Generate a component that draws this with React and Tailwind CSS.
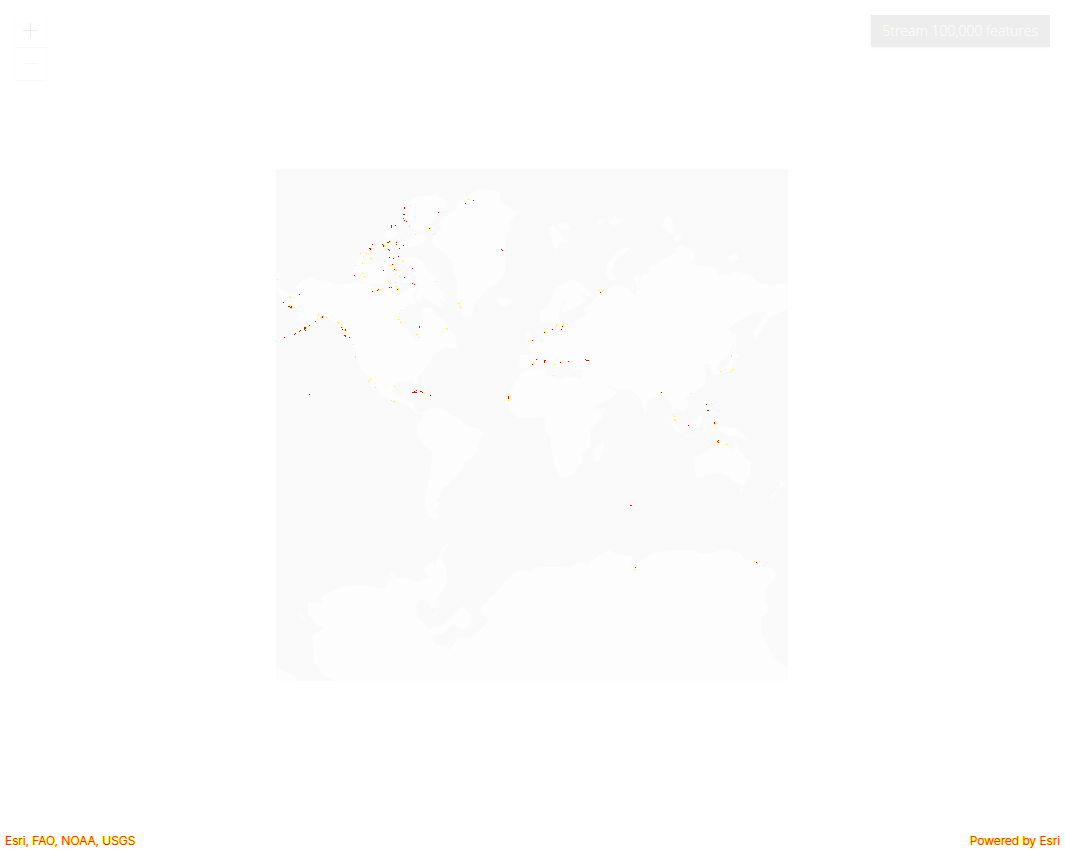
import React from "react";

// Land outlines, in third-of-a-pixel map units.
const LAND = [
  // North America
  "M18 378L30 386 48 396 70 402 85 398 78 380 95 362 122 351 140 360 170 362 200 375 240 370 290 370 312 382 345 388 375 402 395 405 425 372 440 388 430 410 440 430 420 432 400 448 384 476 392 498 418 510 432 540 446 546 452 520 448 500 456 478 452 450 470 442 490 448 500 470 520 478 530 500 545 512 560 540 548 556 560 565 555 568 525 562 510 574 490 585 480 605 466 625 446 648 443 660 446 684 438 688 430 662 400 662 375 668 372 700 385 710 400 706 405 698 415 700 413 722 433 726 433 748 445 757 456 756 452 763 438 760 425 748 410 733 370 722 335 710 318 685 300 660 292 648 308 672 320 692 310 688 285 642 268 622 258 600 258 568 240 542 222 520 205 495 180 478 155 472 138 484 120 496 95 512 72 525 110 496 92 485 80 478 88 462 68 455 60 440 72 428 50 412 30 408Z",
  // Greenland
  "M490 252L488 230 515 205 505 185 530 165 560 148 562 125 590 112 600 98 640 85 688 96 692 130 718 140 742 155 722 185 722 205 708 225 708 260 704 290 708 325 700 350 680 372 650 385 638 405 620 418 612 445 602 474 580 466 566 445 560 410 562 372 552 345 545 300 525 282Z",
  // Arctic archipelago
  "M403 148L422 118 450 108 500 105 528 125 520 148 498 170 482 188 488 205 470 215 440 214 412 190 402 168Z",
  "M410 292L440 290 462 312 476 335 500 352 498 375 522 395 525 425 508 420 528 446 500 438 470 415 438 400 452 378 430 345 408 325 392 310Z",
  "M298 318L330 300 350 318 352 345 338 372 300 370 270 362 275 340Z",
  "M252 318L262 296 290 300 300 318 270 345 252 346Z",
  "M272 278L300 262 322 270 318 290 282 296Z",
  "M340 225L362 205 384 212 376 235 352 240Z",
  "M385 248L420 232 440 222 470 230 462 250 420 262 392 266Z",
  "M345 280L372 272 384 300 372 316 352 308Z",
  "M395 352L420 348 425 362 410 372 396 366Z",
  "M440 400L455 410 450 424 438 418Z",
  "M545 545L558 538 562 565 540 562Z",
  "M425 697L448 690 468 702 460 706ZM470 708L492 714 480 718Z",
  // Iceland
  "M685 420L695 412 712 414 728 418 722 432 702 441 690 436Z",
  // South America
  "M457 757L470 748 485 740 520 748 548 768 570 775 580 793 600 800 626 806 640 818 638 830 625 850 622 870 612 888 583 910 578 930 560 952 545 962 540 975 520 982 512 1000 500 1020 509 1028 495 1054 508 1070 495 1082 475 1068 465 1040 466 1015 472 985 480 940 485 910 487 872 460 856 448 832 441 812 442 795 455 778Z",
  "M528 1050L540 1050 536 1057Z",
  // Africa and Madagascar
  "M765 630L780 632 830 622 832 648 868 660 885 650 930 654 938 680 968 728 975 748 1006 743 998 768 962 810 960 860 938 882 938 906 922 926 915 940 900 948 870 952 855 918 848 882 840 855 842 835 825 810 825 780 812 770 780 773 745 774 726 756 714 738 716 705 735 665Z",
  "M976 862L1000 845 1002 862 988 904 972 902Z",
  // Eurasia
  "M748 585L785 585 775 560 800 542 825 522 832 498 850 508 880 490 910 482 950 465 940 445 962 432 980 410 1000 392 1040 374 1070 382 1096 410 1104 382 1090 352 1108 345 1106 375 1118 345 1140 340 1134 320 1160 312 1175 300 1220 278 1218 262 1238 255 1268 270 1272 298 1262 312 1305 320 1322 320 1340 326 1345 346 1385 344 1388 332 1440 345 1470 370 1512 375 1540 370 1554 376 1554 448 1500 470 1480 500 1458 540 1452 515 1480 475 1488 455 1450 458 1400 486 1372 508 1390 522 1392 545 1370 590 1340 612 1344 642 1328 645 1322 612 1298 610 1308 640 1304 668 1275 698 1248 712 1256 738 1240 754 1212 740 1212 762 1235 788 1220 785 1198 722 1172 700 1136 720 1128 764 1106 710 1080 686 1042 688 1020 682 997 660 1018 684 1042 695 1018 720 970 738 930 668 942 630 905 627 905 604 892 604 894 626 862 590 842 582 874 620 858 622 826 590 800 595 788 615 775 626 748 622Z",
  "M810 450L830 446 850 410 860 382 905 357 935 370 962 398 960 410 930 402 950 424 922 440 878 460 876 446 892 418 872 434 866 480 856 492 842 482 812 488Z",
  "M765 520L778 510 784 528 798 548 782 554 768 548Z",
  // Svalbard, Franz Josef Land, Novaya Zemlya, Severnaya Zemlya
  "M835 202L852 196 878 228 892 250 876 240 856 272Z M862 192L888 186 905 205 870 210Z",
  "M982 182L1005 176 1002 186 990 195ZM1020 185L1035 164 1042 180 1068 172 1032 198Z",
  "M1080 264L1060 262 1035 282 1012 310 1008 345 1020 362 1036 358 1024 334 1034 306 1062 282Z",
  "M1176 200L1184 176 1198 164 1208 184 1216 215 1202 222ZM1212 240L1220 222 1236 228 1222 248Z",
  "M1372 288L1400 280 1408 300 1380 302ZM1412 290L1430 298 1414 298Z",
  // East Asian islands
  "M1390 600L1385 630 1358 640 1330 645 1350 630 1372 615 1380 598ZM1380 590L1400 575 1408 590 1390 596Z M1392 520L1400 520 1400 572 1392 566Z",
  "M1300 718L1308 718 1315 745 1325 760 1318 770 1302 742Z M1254 800L1288 765 1298 772 1285 806 1262 808Z",
  "M1195 775L1225 800 1236 820 1222 818ZM1235 822L1278 830 1270 834ZM1296 792L1320 786 1305 800 1315 818 1298 815Z",
  "M1332 795L1360 800 1400 805 1436 838 1400 832 1375 826 1350 814Z",
  // Australia and New Zealand
  "M1270 890L1290 884 1320 870 1330 855 1350 845 1372 848 1370 860 1388 870 1395 837 1408 872 1442 908 1440 945 1420 978 1388 964 1378 950 1350 938 1310 945 1280 954 1274 930Z",
  "M1405 985L1422 984 1414 1000ZM1528 955L1548 972 1532 988 1530 970ZM1528 985L1510 1012 1495 1016 1518 990Z",
  // Antarctica
  "M113 1325L160 1332 152 1312 210 1282 270 1274 350 1288 355 1256 400 1253 440 1265 490 1250 500 1195 520 1160 545 1143 518 1178 516 1195 526 1220 532 1255 520 1292 498 1315 500 1340 482 1345 470 1320 448 1322 438 1340 442 1370 475 1406 520 1395 580 1337 606 1368 602 1400 572 1408 550 1393 520 1420 483 1430 500 1455 533 1456 535 1472 560 1440 605 1430 635 1405 656 1385 650 1372 632 1360 635 1342 690 1285 700 1268 744 1230 780 1236 800 1222 900 1220 930 1208 952 1213 980 1190 1015 1170 1040 1183 1087 1190 1083 1228 1120 1198 1150 1180 1220 1170 1270 1170 1290 1182 1335 1176 1365 1165 1412 1180 1422 1198 1450 1205 1500 1222 1518 1238 1512 1260 1488 1285 1482 1320 1497 1355 1473 1375 1475 1420 1510 1490 1554 1525 1554 1563 195 1563 155 1542 133 1505 128 1425 162 1407 138 1392 114 1360Z",
  "M86 1365L96 1360 108 1385 92 1378ZM355 1245L370 1237 382 1248 366 1254ZM464 1222L490 1205 500 1232 482 1250 466 1240ZM488 1365L505 1348 508 1354 492 1370ZM18 1524L70 1544 88 1563 18 1563Z",
  "M1478 1333L1490 1330 1490 1340 1480 1342Z",
];

const RED = [
  [403, 142], [403, 145], [400, 163], [403, 163], [400, 175], [403, 181], [409, 184], [364, 196], [364, 199], [364, 202],
  [376, 196], [505, 157], [586, 130], [610, 121], [478, 205], [694, 268], [697, 271], [307, 253], [298, 265], [301, 265],
  [301, 268], [337, 253], [340, 256], [340, 259], [352, 247], [355, 247], [358, 244], [379, 247], [379, 253], [400, 256],
  [388, 265], [355, 268], [358, 271], [358, 292], [370, 295], [385, 289], [367, 313], [373, 328], [340, 331], [427, 325],
  [403, 352], [253, 346], [427, 370], [433, 373], [307, 394], [322, 391], [325, 388], [358, 382], [364, 382], [382, 388],
  [88, 403], [40, 427], [55, 439], [58, 439], [61, 442], [64, 439], [64, 442], [157, 469], [157, 472], [136, 484],
  [118, 496], [103, 502], [106, 502], [103, 505], [106, 505], [103, 508], [106, 511], [91, 511], [88, 514], [76, 520],
  [73, 523], [43, 532], [214, 502], [217, 508], [226, 508], [226, 511], [223, 526], [226, 526], [226, 529], [238, 532],
  [448, 499], [448, 502], [118, 703], [427, 697], [430, 697], [433, 697], [436, 697], [439, 697], [433, 694], [439, 691],
  [451, 694], [454, 694], [457, 697], [481, 706], [715, 709], [715, 712], [715, 715], [991, 397], [877, 499], [874, 508],
  [847, 508], [823, 517], [787, 541], [799, 598], [787, 613], [823, 601], [826, 601], [823, 604], [823, 607], [871, 607],
  [895, 604], [946, 598], [949, 601], [952, 601], [955, 601], [1174, 697], [1309, 733], [1312, 751], [1315, 751],
  [1255, 796], [1333, 787], [1333, 790], [1345, 841], [1342, 844], [1345, 847], [1081, 1036], [1084, 1036], [1096, 1222],
  [1459, 1207],
];

const YELLOW = [
  [400, 148], [406, 187], [418, 196], [418, 199], [436, 223], [475, 205], [481, 205], [490, 223], [496, 220], [595, 118],
  [382, 241], [358, 241], [361, 244], [343, 256], [343, 259], [340, 253], [271, 280], [280, 277], [289, 280], [301, 274],
  [304, 277], [280, 289], [301, 295], [382, 277], [382, 301], [397, 304], [277, 310], [256, 316], [358, 316], [361, 316],
  [370, 313], [373, 322], [376, 331], [379, 331], [424, 328], [277, 340], [283, 349], [256, 349], [376, 343], [388, 349],
  [355, 364], [376, 367], [364, 379], [379, 379], [385, 385], [385, 388], [337, 385], [325, 391], [496, 364], [22, 358],
  [58, 409], [61, 412], [61, 436], [64, 445], [67, 442], [145, 463], [142, 469], [151, 472], [154, 472], [169, 472],
  [142, 478], [112, 490], [115, 499], [109, 502], [130, 496], [85, 514], [205, 487], [205, 490], [217, 502], [223, 508],
  [220, 523], [229, 520], [250, 553], [394, 451], [388, 460], [385, 478], [391, 487], [439, 523], [448, 532], [565, 430],
  [568, 436], [571, 442], [529, 505], [532, 508], [775, 544], [256, 589], [256, 592], [301, 658], [295, 664], [316, 682],
  [373, 679], [364, 721], [370, 724], [373, 724], [436, 694], [454, 703], [463, 700], [715, 706], [715, 718], [715, 721],
  [985, 391], [997, 394], [1000, 391], [877, 496], [877, 502], [874, 505], [874, 511], [859, 496], [856, 502], [844, 508],
  [823, 514], [823, 520], [784, 541], [790, 607], [787, 610], [853, 613], [850, 646], [871, 604], [892, 604], [898, 604],
  [958, 601], [1171, 697], [1264, 700], [1384, 586], [1384, 589], [1366, 628], [1351, 634], [1381, 634], [1387, 628],
  [1312, 748], [1210, 763], [1213, 769], [1213, 778], [1216, 781], [1258, 802], [1336, 784], [1333, 793], [1345, 844],
  [1339, 847], [1342, 853], [1369, 853], [1093, 1228], [1453, 1204], [1462, 1210],
];

function Points({ cells, className }) {
  return (
    <g className={className}>
      {cells.map(([x, y]) => (
        <rect key={`${x}-${y}`} x={Math.floor(x / 3) * 3} y={Math.floor(y / 3) * 3} width="3" height="3" />
      ))}
    </g>
  );
}

function WorldMap() {
  return (
    <svg
      viewBox="18 27 1536 1536"
      className="block w-full max-w-[512px] bg-[#fafafa]"
      role="img"
      aria-label="World map"
    >
      <g className="fill-[#fdfdfd]">
        {LAND.map((d) => (
          <path key={d} d={d} />
        ))}
      </g>
      <g shapeRendering="crispEdges">
        <Points cells={YELLOW} className="fill-[#ffff00]" />
        <Points cells={RED} className="fill-[#ff0000]" />
      </g>
    </svg>
  );
}

function ZoomButton({ label, path, className }) {
  return (
    <button type="button" aria-label={label} className="flex size-8 items-center justify-center bg-white">
      <svg viewBox="0 0 16 16" className={`size-4 ${className}`} fill="none" shapeRendering="crispEdges">
        <path d={path} />
      </svg>
    </button>
  );
}

export default function App() {
  return (
    <main className="relative min-h-screen bg-white font-['Open_Sans','Noto_Sans',sans-serif]">
      <div className="flex min-h-screen items-center justify-center pt-px pr-px">
        <WorldMap />
      </div>

      <div className="absolute top-[15px] left-[15px] flex flex-col gap-px bg-[#f9f9f9] shadow-[0_1px_2px_rgba(0,0,0,0.03)]">
        <ZoomButton label="Zoom in" path="M0 7.5H15M7.5 0V15" className="stroke-[#ededed]" />
        <ZoomButton label="Zoom out" path="M0 7.5H15" className="stroke-[#f8f8f8]" />
      </div>

      <button
        type="button"
        className="absolute top-[15px] right-[15px] h-8 bg-[#ededed] px-3 text-sm font-light whitespace-nowrap text-white shadow-[0_1px_2px_rgba(0,0,0,0.03)]"
      >
        Stream 100,000 features
      </button>

      <footer className="absolute inset-x-0 bottom-0 flex justify-between px-[5px] font-['Inter',sans-serif] text-xs font-light text-[#ff0000] [text-shadow:-1px_0_#ffff00,1px_0_#ffff00]">
        <span>Esri, FAO, NOAA, USGS</span>
        <span>Powered by Esri</span>
      </footer>
    </main>
  );
}
